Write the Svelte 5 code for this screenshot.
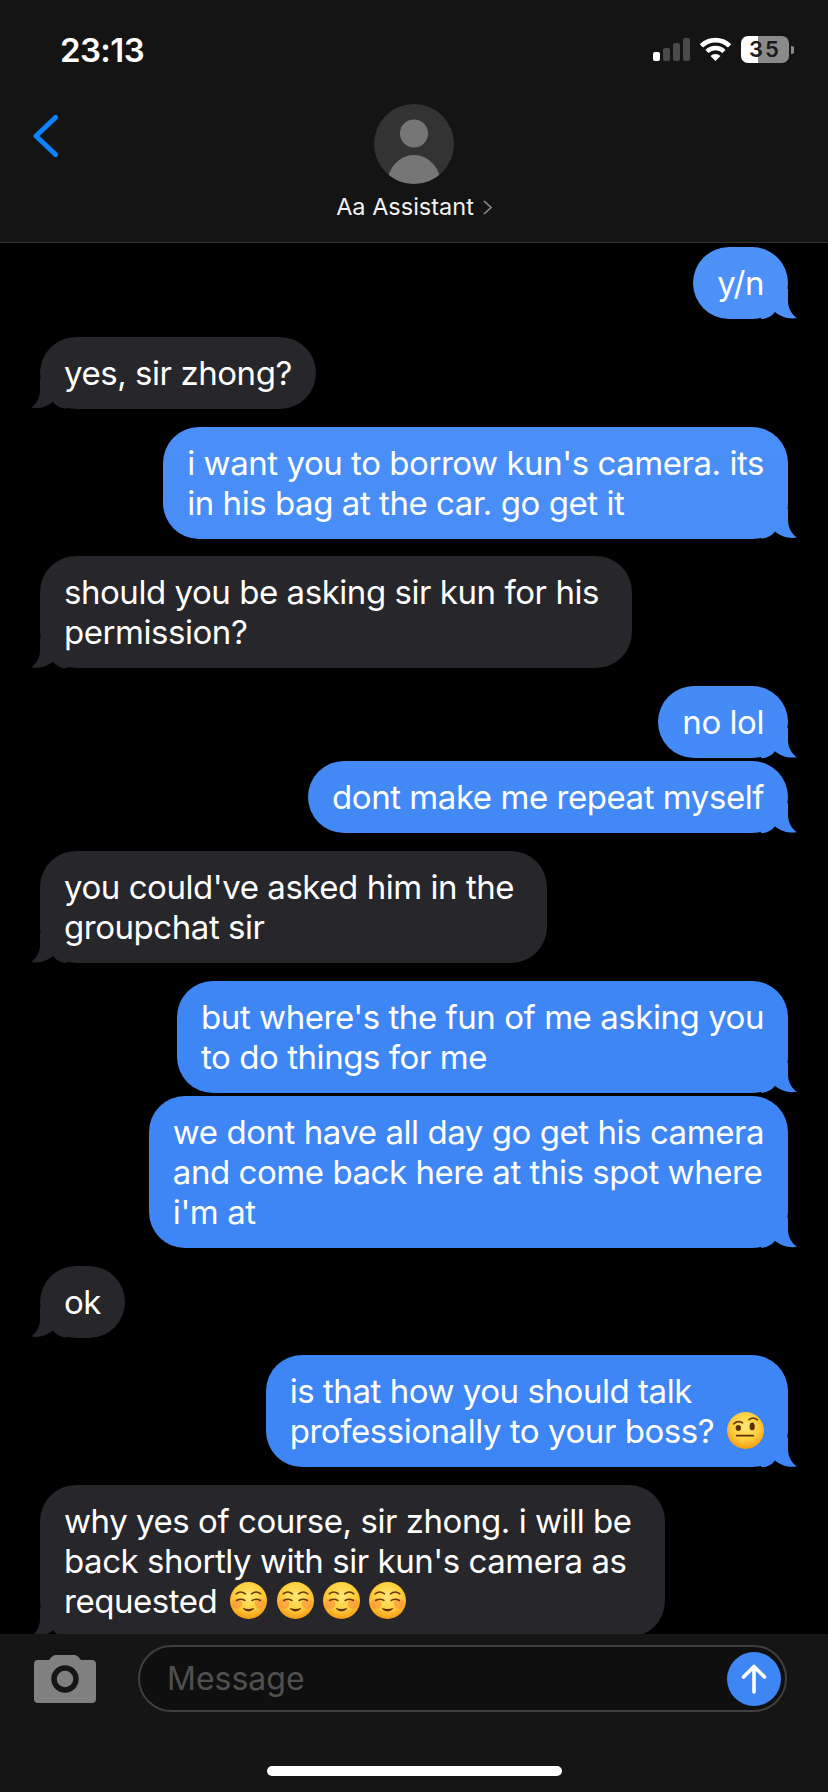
<script lang="ts">
  type Msg = { me: boolean; text: string; emoji?: ('smile' | 'brow')[]; joined?: boolean };

  const messages: Msg[] = [
    { me: true, text: 'y/n' },
    { me: false, text: 'yes, sir zhong?' },
    { me: true, text: "i want you to borrow kun's camera. its\nin his bag at the car. go get it" },
    { me: false, text: 'should you be asking sir kun for his\npermission?' },
    { me: true, text: 'no lol' },
    { me: true, text: 'dont make me repeat myself', joined: true },
    { me: false, text: "you could've asked him in the\ngroupchat sir" },
    { me: true, text: "but where's the fun of me asking you\nto do things for me" },
    { me: true, text: "we dont have all day go get his camera\nand come back here at this spot where\ni'm at", joined: true },
    { me: false, text: 'ok' },
    { me: true, text: 'is that how you should talk\nprofessionally to your boss?', emoji: ['brow'] },
    {
      me: false,
      text: "why yes of course, sir zhong. i will be\nback shortly with sir kun's camera as\nrequested",
      emoji: ['smile', 'smile', 'smile', 'smile'],
    },
  ];
</script>

{#snippet emojiFace(kind: 'smile' | 'brow')}
  <svg class="emoji" viewBox="0 0 36 36" aria-hidden="true">
    <circle cx="18" cy="18" r="18" fill="url(#face)" />
    {#if kind === 'smile'}
      <circle cx="7" cy="21" r="5" fill="#f98a3c" opacity="0.55" />
      <circle cx="29" cy="21" r="5" fill="#f98a3c" opacity="0.55" />
      <path d="M6 11.500q4.500-3.500 9 0M21 11.500q4.500-3.500 9 0M6.500 18q4-2.500 8 0M21.500 18q4-2.500 8 0" fill="none" stroke="#6b3a08" stroke-width="1.500" stroke-linecap="round" />
      <path d="M13 26q5 4.500 10 0q-5 1.500-10 0z" fill="#5c3007" stroke="#5c3007" stroke-width="1" stroke-linejoin="round" />
    {:else}
      <path d="M6.500 11.500q4-3.500 8.500-1M21.500 7.500q3.500-3 8 0" fill="none" stroke="#6b3a08" stroke-width="1.700" stroke-linecap="round" />
      <ellipse cx="11" cy="15.500" rx="2.600" ry="2.800" fill="#5c3007" />
      <ellipse cx="24.500" cy="14" rx="2.500" ry="3.800" fill="#5c3007" />
      <path d="M9.500 23h16" fill="none" stroke="#5c3007" stroke-width="1.800" stroke-linecap="round" />
    {/if}
  </svg>
{/snippet}

<svg class="defs" width="0" height="0" aria-hidden="true">
  <defs>
    <radialGradient id="face" cx="50%" cy="38%" r="62%">
      <stop offset="0" stop-color="#ffe873" />
      <stop offset="0.6" stop-color="#ffcf3d" />
      <stop offset="1" stop-color="#f59a16" />
    </radialGradient>
  </defs>
</svg>

<div class="screen">
  <header class="top">
    <div class="status">
      <span class="time">23:13</span>
      <div class="status-icons">
        <div class="signal">
          <i class="on"></i><i class="b2"></i><i class="b3"></i><i class="b4"></i>
        </div>
        <svg class="wifi" viewBox="0 0 31 24" aria-hidden="true">
          <path d="M1.400 8.900a20 20 0 0 1 28.200 0" fill="none" stroke="#fff" stroke-width="4.600" />
          <path d="M7 14.500a12 12 0 0 1 17 0" fill="none" stroke="#fff" stroke-width="4.400" />
          <path d="M15.500 24l-5-5a7 7 0 0 1 10 0z" fill="#fff" />
        </svg>
        <div class="battery"><span>35</span></div>
        <svg class="nub" viewBox="0 0 3 8" aria-hidden="true"><path d="M0 0a4 4 0 0 1 0 8z" fill="#8a8a8a" /></svg>
      </div>
    </div>

    <div class="nav">
      <svg class="back" viewBox="0 0 25 42" aria-hidden="true">
        <path d="M22.500 2.500L3 21l19.500 18.500" fill="none" stroke="#0a84ff" stroke-width="5" stroke-linecap="round" stroke-linejoin="round" />
      </svg>
      <div class="contact">
        <svg class="avatar" viewBox="0 0 80 80" aria-hidden="true">
          <defs><clipPath id="disc"><circle cx="40" cy="40" r="40" /></clipPath></defs>
          <circle cx="40" cy="40" r="40" fill="#333333" />
          <g clip-path="url(#disc)">
            <circle cx="40" cy="29.500" r="14" fill="#767676" />
            <ellipse cx="40" cy="81" rx="27" ry="30" fill="#767676" />
          </g>
        </svg>
        <div class="name">
          <span>Aa Assistant</span>
          <svg class="name-chev" viewBox="0 0 9 15" aria-hidden="true">
            <path d="M1 1l7 6.500-7 6.500" fill="none" stroke="#8c8c8c" stroke-width="1.600" />
          </svg>
        </div>
      </div>
    </div>
  </header>

  <main class="thread">
    {#each messages as m}
      <div class="row" class:me={m.me} class:joined={m.joined}>
        <!-- incoming bubbles that wrap keep some slack on the right -->
        <div class="bubble" class:slack={!m.me && m.text.includes('\n')}>
          <span class="tail"></span>
          <span class="text">{m.text}{#if m.emoji}{#each m.emoji as e}{' '}{@render emojiFace(e)}{/each}{/if}</span>
        </div>
      </div>
    {/each}
  </main>

  <footer class="composer">
    <div class="input-row">
      <svg class="camera" viewBox="0 0 62 48" aria-hidden="true">
        <path d="M4 5h11l3-3.500Q19.500 0 21.500 0h19q2 0 3.500 1.500L47 5h11q4 0 4 4v35q0 4-4 4H4q-4 0-4-4V9q0-4 4-4z" fill="#808080" />
        <circle cx="31" cy="24" r="11" fill="#808080" stroke="#151515" stroke-width="5.500" />
      </svg>
      <div class="field">
        <span class="placeholder">Message</span>
        <div class="send">
          <svg viewBox="0 0 26 30" aria-hidden="true">
            <path d="M13 28V3M2.500 13L13 2.500 23.500 13" fill="none" stroke="#fff" stroke-width="3.600" stroke-linecap="round" stroke-linejoin="round" />
          </svg>
        </div>
      </div>
    </div>
    <div class="home"></div>
  </footer>
</div>

<style>
  :global(body) {
    margin: 0;
    background: #000;
  }

  .defs {
    position: absolute;
  }

  .screen {
    width: 828px;
    height: 1792px;
    display: flex;
    flex-direction: column;
    overflow: hidden;
    background: #000;
    color: #fff;
    font-family: Inter, 'Liberation Sans', sans-serif;
  }

  .top {
    flex: none;
    height: 243px;
    box-sizing: border-box;
    background: #141414;
    border-bottom: 1px solid #343434;
  }

  .status {
    height: 100px;
    display: flex;
    justify-content: space-between;
    align-items: flex-start;
    padding: 31px 34px 0 60px;
    box-sizing: border-box;
  }
  .time {
    font-size: 33px;
    font-weight: 600;
    line-height: 38px;
    letter-spacing: -0.6px;
  }
  .status-icons {
    display: flex;
    align-items: flex-start;
    padding-top: 5px;
  }
  .signal {
    display: flex;
    align-items: flex-end;
    gap: 3px;
    height: 25px;
    width: 37px;
    margin-right: 10px;
  }
  .signal i {
    width: 7px;
    border-radius: 2px;
    background: #4a4a4a;
  }
  .signal .on {
    height: 9px;
    background: #fff;
  }
  .signal .b2 {
    height: 13px;
  }
  .signal .b3 {
    height: 18px;
  }
  .signal .b4 {
    height: 23px;
  }
  .wifi {
    width: 31px;
    height: 24px;
    margin-right: 10px;
    margin-top: 1px;
  }
  .battery {
    width: 48px;
    height: 27px;
    border-radius: 7px;
    background: linear-gradient(90deg, #fff 0 17px, #8a8a8a 17px);
    display: flex;
    align-items: center;
    justify-content: center;
  }
  .battery span {
    color: #1a1a1a;
    font-size: 22px;
    font-weight: 600;
    letter-spacing: 2px;
    line-height: 27px;
  }
  .nub {
    width: 3px;
    height: 8px;
    margin: 10px 0 0 2px;
  }

  .nav {
    position: relative;
    display: flex;
    justify-content: center;
    padding-top: 4px;
  }
  .back {
    position: absolute;
    left: 33px;
    top: 15px;
    width: 25px;
    height: 42px;
  }
  .contact {
    display: flex;
    flex-direction: column;
    align-items: center;
  }
  .avatar {
    width: 80px;
    height: 80px;
    display: block;
  }
  .name {
    display: flex;
    align-items: center;
    gap: 9px;
    margin-top: 8px;
    font-size: 23.500px;
    line-height: 30px;
    color: #f2f2f2;
  }
  .name-chev {
    width: 9px;
    height: 15px;
  }

  .thread {
    flex: 1;
    min-height: 0;
    overflow: hidden;
    padding: 4px 40px 0;
    display: flex;
    flex-direction: column;
  }
  .row {
    display: flex;
    margin-top: 17.800px;
  }
  .row:first-child {
    margin-top: 0;
  }
  .row.joined {
    margin-top: 3px;
  }
  .row.me {
    justify-content: flex-end;
  }

  .bubble {
    position: relative;
    flex: none;
    padding: 16px 24px;
    border-radius: 36px;
    background: #26262b;
    font-size: 33px;
    letter-spacing: -0.45px;
    line-height: 40px;
  }
  .bubble.slack {
    padding-right: 33px;
  }
  .row.me .bubble {
    background: linear-gradient(180deg, #4e92f8 240px, #3f86f5 1000px, #3d84f5 1640px) fixed;
  }
  .text {
    position: relative;
    display: block;
    white-space: pre;
  }
  .tail {
    position: absolute;
    bottom: 0;
    left: -9px;
    width: 36px;
    height: 30px;
    background: inherit;
    clip-path: path('M9 0V12C9 19 5 26 0 29C8 30.500 16 28 22 23C25 27 30 30 36 30V0Z');
  }
  .row.me .tail {
    left: auto;
    right: -9px;
    clip-path: path('M27 0V12C27 19 31 26 36 29C28 30.500 20 28 14 23C11 27 6 30 0 30V0Z');
  }
  .emoji {
    width: 37px;
    height: 37px;
    vertical-align: -6px;
    margin-left: 0.5px;
  }
  .emoji:first-of-type {
    margin-left: 4px;
  }

  .composer {
    flex: none;
    height: 158px;
    background: #151515;
    position: relative;
  }
  .input-row {
    display: flex;
    align-items: flex-start;
    padding: 11px 41px 0 34px;
    gap: 42px;
  }
  .camera {
    flex: none;
    width: 62px;
    height: 48px;
    margin-top: 10px;
  }
  .field {
    flex: 1;
    height: 67px;
    box-sizing: border-box;
    border: 2px solid #3f3f3f;
    border-radius: 34px;
    background: #0f0f0f;
    display: flex;
    align-items: center;
    justify-content: space-between;
    padding: 0 4px 0 27px;
  }
  .placeholder {
    font-size: 32px;
    color: #505050;
  }
  .send {
    width: 54px;
    height: 54px;
    border-radius: 50%;
    background: #3f86f5;
    display: flex;
    align-items: center;
    justify-content: center;
  }
  .send svg {
    width: 26px;
    height: 30px;
  }
  .home {
    position: absolute;
    left: 267px;
    top: 132px;
    width: 295px;
    height: 10px;
    border-radius: 5px;
    background: #fff;
  }
</style>
